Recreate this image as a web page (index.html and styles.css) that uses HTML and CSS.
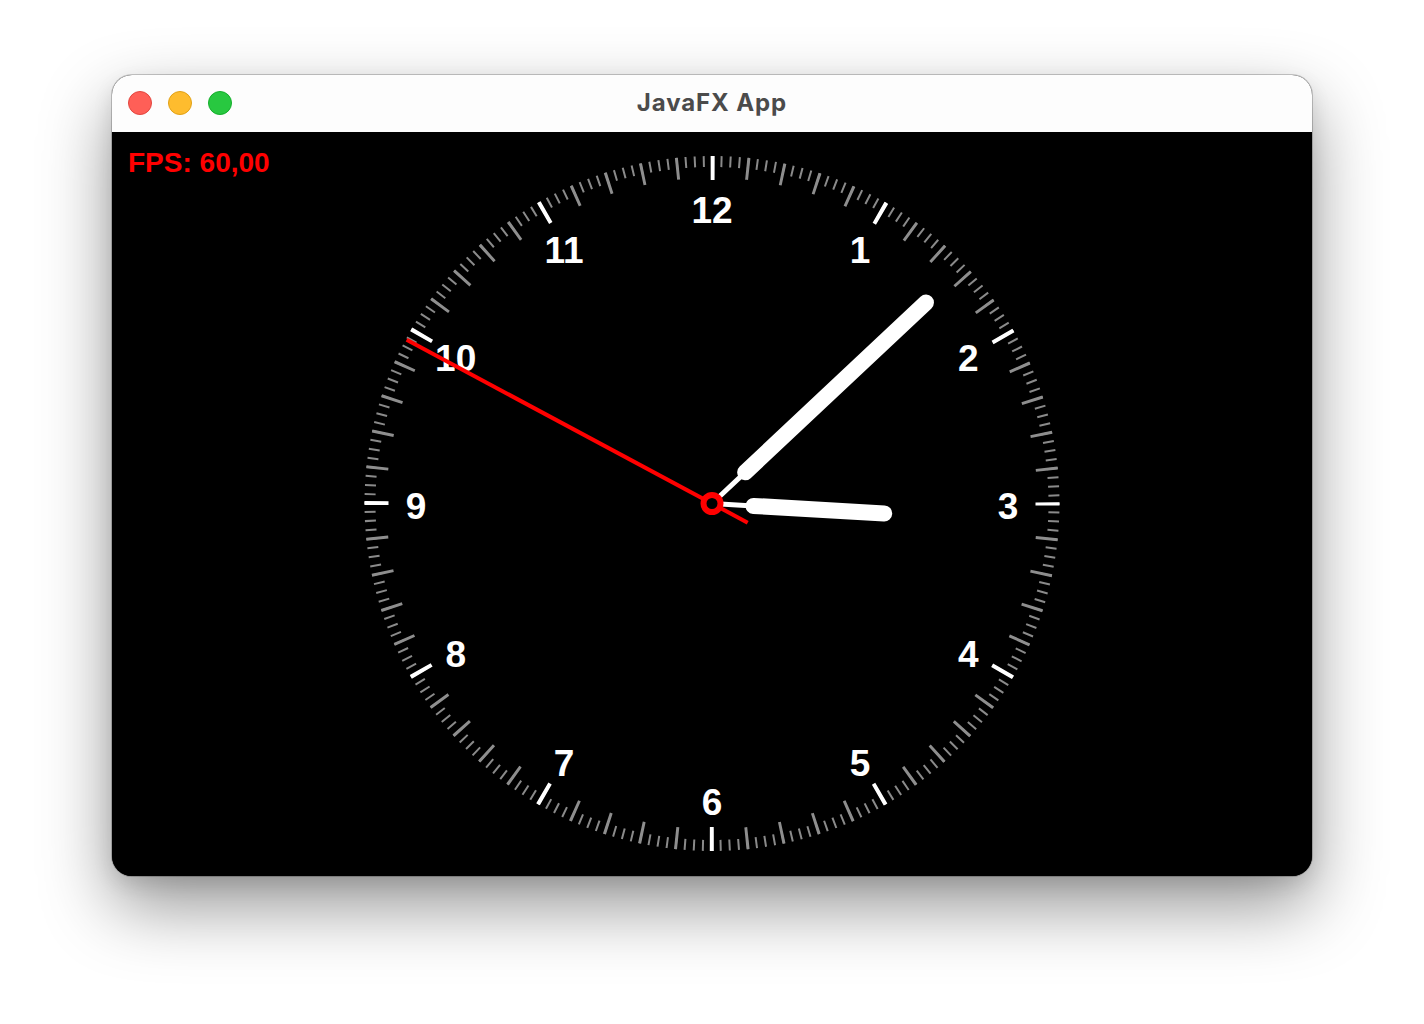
FILE: index.html
```html
<!DOCTYPE html>
<html lang="en">
<head>
<meta charset="utf-8">
<title>JavaFX App</title>
<link rel="stylesheet" href="styles.css">
</head>
<body>
<div class="window">
  <div class="titlebar">
    <div class="lights">
      <span class="light red"></span>
      <span class="light yellow"></span>
      <span class="light green"></span>
    </div>
    <div class="title">JavaFX App</div>
  </div>
  <div class="content">
    <svg class="clock" width="1200" height="744" viewBox="0 0 1200 744">
      <text class="fps" x="16" y="40">FPS: 60,00</text>
      <circle class="tick-minor" cx="600" cy="371.5" r="342" />
      <circle class="tick-minute" cx="600" cy="371.5" r="336.5" />
      <circle class="tick-hour" cx="600" cy="371.5" r="335.5" />
      <g class="numerals">
        <text x="748" y="131.1">1</text>
        <text x="856.3" y="239.4">2</text>
        <text x="896" y="387.4">3</text>
        <text x="856.3" y="535.4">4</text>
        <text x="748" y="643.7">5</text>
        <text x="600" y="683.4">6</text>
        <text x="452" y="643.7">7</text>
        <text x="343.7" y="535.4">8</text>
        <text x="304" y="387.4">9</text>
        <text x="343.7" y="239.4">10</text>
        <text x="452" y="131.1">11</text>
        <text x="600" y="91.4">12</text>
      </g>
      <g transform="rotate(93.3 600 371.5)">
        <line class="hand-thin" x1="600" y1="371.5" x2="600" y2="330" />
        <line class="hand-hour" x1="600" y1="330" x2="600" y2="199" />
      </g>
      <g transform="rotate(46.8 600 371.5)">
        <line class="hand-thin" x1="600" y1="371.5" x2="600" y2="326" />
        <line class="hand-minute" x1="600" y1="326" x2="600" y2="78" />
      </g>
      <g transform="rotate(298.2 600 371.5)">
        <line class="hand-second" x1="600" y1="412" x2="600" y2="25" />
      </g>
      <circle class="pin" cx="600" cy="371.5" r="8.5" />
    </svg>
  </div>
</div>
</body>
</html>
```
FILE: styles.css
```css
html, body {
  margin: 0;
  padding: 0;
  background: #ffffff;
}

body {
  width: 1424px;
  height: 1024px;
  overflow: hidden;
  padding-top: 75px;
  box-sizing: border-box;
}

.window {
  width: 1200px;
  height: 801px;
  margin: 0 auto;
  border-radius: 20px;
  overflow: hidden;
  background: #000;
  box-shadow: 0 0 0 1px rgba(0, 0, 0, 0.2), 0 30px 70px rgba(0, 0, 0, 0.42), 0 8px 20px rgba(0, 0, 0, 0.1);
  display: flex;
  flex-direction: column;
}

.titlebar {
  height: 57px;
  flex: 0 0 57px;
  background: #fdfdfd;
  position: relative;
  display: flex;
  align-items: center;
  justify-content: center;
}

.lights {
  position: absolute;
  left: 16px;
  top: 16px;
  display: flex;
  gap: 16px;
}

.light {
  width: 24px;
  height: 24px;
  border-radius: 50%;
  box-sizing: border-box;
}

.red { background: #ff5f57; border: 1px solid #e2463f; }
.yellow { background: #febc2e; border: 1px solid #e1a116; }
.green { background: #28c840; border: 1px solid #14ae2b; }

.title {
  font-family: "Inter", "Liberation Sans", sans-serif;
  font-weight: 700;
  font-size: 24px;
  color: #4b4b4b;
  letter-spacing: 0.9px;
  margin-top: -2px;
}

.content {
  flex: 1;
  background: #000;
}

.clock {
  display: block;
}

.fps {
  font-family: "Liberation Sans", Arial, sans-serif;
  font-weight: 700;
  font-size: 28px;
  fill: #ff0000;
}

.tick-minor {
  fill: none;
  stroke: #8a8a8a;
  stroke-width: 11;
  stroke-dasharray: 2 6.9535;
  stroke-dashoffset: 1;
}

.tick-minute {
  fill: none;
  stroke: #8e8e8e;
  stroke-width: 22;
  stroke-dasharray: 3 32.2382;
  stroke-dashoffset: 1.5;
}

.tick-hour {
  fill: none;
  stroke: #ffffff;
  stroke-width: 24;
  stroke-dasharray: 4 171.668;
  stroke-dashoffset: 2;
}

.numerals text {
  font-family: "Liberation Sans", Arial, sans-serif;
  font-weight: 700;
  font-size: 37px;
  fill: #ffffff;
  text-anchor: middle;
}

.hand-thin {
  stroke: #ffffff;
  stroke-width: 5;
}

.hand-hour {
  stroke: #ffffff;
  stroke-width: 16;
  stroke-linecap: round;
}

.hand-minute {
  stroke: #ffffff;
  stroke-width: 16;
  stroke-linecap: round;
}

.hand-second {
  stroke: #ff0000;
  stroke-width: 4;
}

.pin {
  fill: #000;
  stroke: #ff0000;
  stroke-width: 6;
}
```
